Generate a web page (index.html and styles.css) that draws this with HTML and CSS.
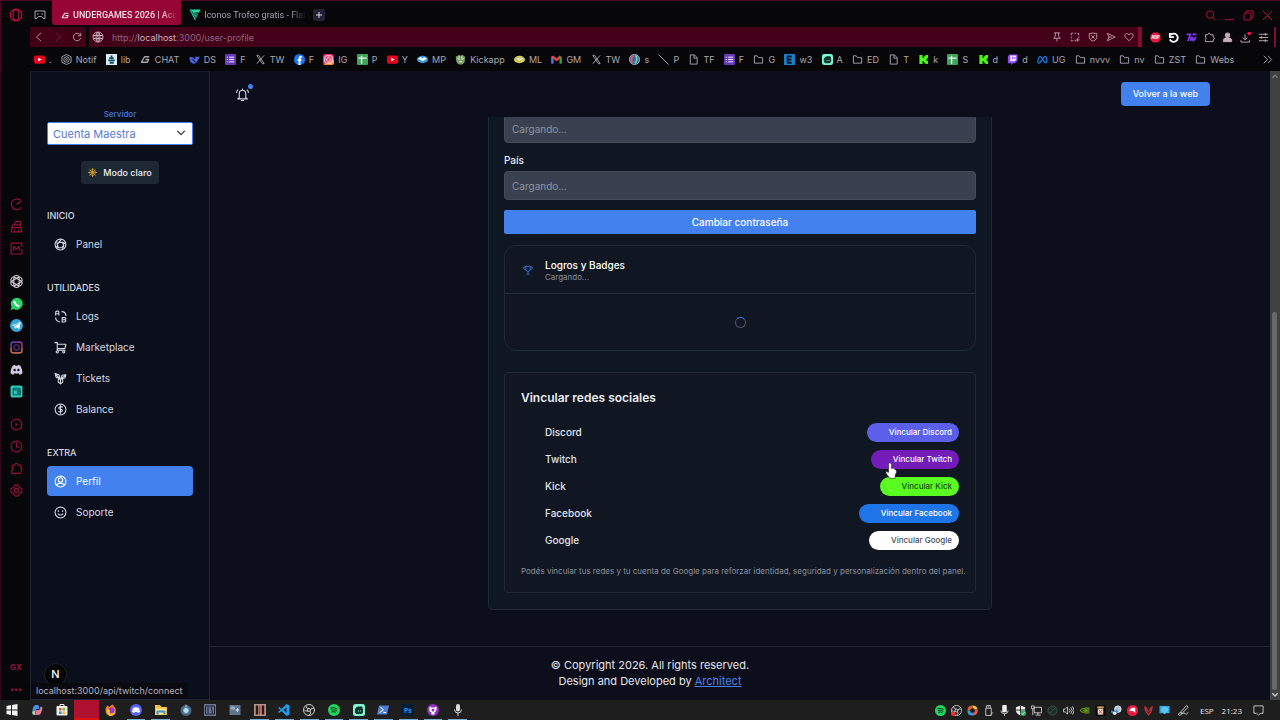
FILE: index.html
```html
<!DOCTYPE html>
<html lang="es">
<head>
<meta charset="utf-8">
<meta name="viewport" content="width=device-width, initial-scale=1">
<title>UNDERGAMES 2026</title>
<link rel="stylesheet" href="styles.css">
</head>
<body>
<svg class="defs" aria-hidden="true">
  <symbol id="folder" viewBox="0 0 24 24"><path d="M3 20V4h6l3 4h9v12z"/></symbol>
  <symbol id="file" viewBox="0 0 24 24"><path d="M5 2h9l6 6v14H5zM13 2v7h7"/></symbol>
  <symbol id="tube" viewBox="0 0 24 24"><rect y="3" width="24" height="18" rx="4" fill="#e8001c" stroke="none"/><path d="M9 8l8 4-8 4z" fill="#fff" stroke="none"/></symbol>
  <symbol id="forms" viewBox="0 0 24 24"><rect width="24" height="24" rx="2" fill="#673ab7" stroke="none"/><path d="M9 7h11M9 12h11M9 17h11M4 7h2M4 12h2M4 17h2" stroke="#fff"/></symbol>
  <symbol id="sheet" viewBox="0 0 24 24"><rect width="24" height="24" rx="2" fill="#3fa35a" stroke="none"/><path d="M3 9h18M10 4v17" stroke="#e8f5e9" stroke-width="3"/></symbol>
  <symbol id="xlogo" viewBox="0 0 24 24"><path d="M4 3h4l12 18h-4zM20 3L4 21"/></symbol>
  <symbol id="kick" viewBox="0 0 24 24"><path d="M3 2h7v6h3V5h3V2h6v7h-3v6h3v7h-6v-3h-3v-3h-3v6H3z" fill="#4cf514" stroke="none"/></symbol>
  <symbol id="ug" viewBox="0 0 24 24"><path d="M20 6H10L3 18h13l3-6h-7" stroke-width="3"/></symbol>
  <symbol id="discord" viewBox="0 0 24 24"><path d="M5 5l4-2 1 2h4l1-2 4 2c3 5 4 9 4 14l-5 3-2-3c-3 1-5 1-8 0l-2 3-5-3C1 14 2 10 5 5z" stroke="none"/><circle cx="8.500" cy="13" r="2.300" fill="#19132a" stroke="none"/><circle cx="15.500" cy="13" r="2.300" fill="#19132a" stroke="none"/></symbol>
  <symbol id="spotify" viewBox="0 0 24 24"><circle cx="12" cy="12" r="12" fill="#1ed760" stroke="none"/><path d="M5 8q8-2 14 2M6 12q7-2 12 2M7 16q5-2 9 1" stroke="#102c18"/></symbol>
  <symbol id="stream" viewBox="0 0 24 24"><rect width="24" height="24" rx="5" fill="#80f5d2" stroke="none"/><path d="M6 10q0-4 5-4h7v4M5 10h14v6q0 3-3 3H8q-3 0-3-3z" fill="#10352d" stroke="#10352d"/><path d="M11 13v2M15 13v2" stroke="#80f5d2"/></symbol>
  <symbol id="obs" viewBox="0 0 24 24"><circle cx="12" cy="12" r="11" fill="#202020"/><circle cx="12" cy="12" r="3"/><path d="M12 9q-7 0-6-5M14 14q4 5-2 8M10 14q-7 1-8-3M15 12q2-6 6-3"/></symbol>
</svg>

<header class="browser">
  <div class="tabs">
    <svg class="i opera" viewBox="0 0 24 24"><circle cx="12" cy="12" r="10"/><ellipse cx="12" cy="12" rx="5" ry="9"/></svg>
    <svg class="i pad" viewBox="0 0 24 24"><path d="M2 4h20v15h-4l-3-4H9l-3 4H2z"/><path d="M6 10h3M15 10h3"/></svg>
    <div class="tab active"><svg class="i" viewBox="0 0 24 24"><use href="#ug"/></svg><span>UNDERGAMES 2026 | Acc</span></div>
    <div class="tab idle"><svg class="i" viewBox="0 0 24 24"><path d="M1 1h22l-3 6H9l9 3-6 13z" fill="#21dfa6" stroke="none"/><path d="M5 3l8 16 2-9H8" stroke="#075844"/></svg><span>Iconos Trofeo gratis - Flat</span></div>
    <button class="plus" aria-label="Nueva pestaña"><svg class="i" viewBox="0 0 24 24"><path d="M12 3v18M3 12h18"/></svg></button>
    <div class="window">
      <svg class="i" viewBox="0 0 24 24"><circle cx="11" cy="10" r="8"/><path d="M16 16l6 6"/></svg>
      <svg class="i" viewBox="0 0 24 24"><path d="M2 21h20"/></svg>
      <svg class="i" viewBox="0 0 24 24"><rect x="2" y="7" width="15" height="15" rx="2"/><path d="M7 7V2h15v15h-5"/></svg>
      <svg class="i" viewBox="0 0 24 24"><path d="M2 2l20 20M22 2L2 22"/></svg>
    </div>
  </div>
  <div class="address">
    <div class="nav">
      <button aria-label="Atrás"><svg class="i" viewBox="0 0 24 24"><path d="M17 2L6 12l11 10"/></svg></button>
      <button aria-label="Adelante" disabled><svg class="i" viewBox="0 0 24 24"><path d="M7 2l11 10L7 22"/></svg></button>
      <button aria-label="Recargar"><svg class="i" viewBox="0 0 24 24"><path d="M21 14a9 9 0 1 1-2-8l2 3M21 2v7h-7"/></svg></button>
    </div>
    <div class="url">
      <svg class="i" viewBox="0 0 24 24"><circle cx="12" cy="12" r="10"/><ellipse cx="12" cy="12" rx="4" ry="10"/><path d="M2 9h20M2 15h20M12 2v20"/></svg>
      <span class="link">http://<b>localhost</b>:3000/user-profile</span>
      <div class="urltools">
        <svg class="i" viewBox="0 0 24 24"><path d="M5 2h14M8 2v8l-4 5h16l-4-5V2M12 15v8"/></svg>
        <svg class="i" viewBox="0 0 24 24"><path d="M3 8V3h5M11 3h4M18 3h3v5M21 11v4M3 11v4M3 18v3h5M11 21h4M18 15v8M14 19h9"/></svg>
        <svg class="i" viewBox="0 0 24 24"><path d="M3 4q9-3 18 0v10q-2 6-9 8-7-2-9-8zM8 8l8 8M16 8l-8 8"/></svg>
        <svg class="i" viewBox="0 0 24 24"><path d="M3 3l19 9-19 9 4-9zM7 12h7"/></svg>
        <svg class="i" viewBox="0 0 24 24"><path d="M12 21L4 13C-2 5 8 0 12 7c4-7 14-2 8 6z"/></svg>
      </div>
    </div>
    <div class="extensions">
      <svg class="i" viewBox="0 0 24 24"><path d="M7 1h10l6 6v10l-6 6H7l-6-6V7z" fill="#e21843" stroke="none"/><text x="12" y="16" text-anchor="middle" class="abp">ABP</text></svg>
      <svg class="i bright" viewBox="0 0 24 24"><path d="M6 6a9 9 0 1 1-2 10M4 2v9h9" stroke-width="4"/></svg>
      <svg class="i seven" viewBox="0 0 24 24"><path d="M1 5h9L4 20M12 11l-2 9M14 11l2 8 6-8M14 5h9" stroke-width="4"/></svg>
      <svg class="i" viewBox="0 0 24 24"><path d="M3 6h5q1-5 5-3l1 3h6v5q4 1 2 5l-2 1v4H3v-5q4-2 0-5z"/></svg>
      <svg class="i" viewBox="0 0 24 24"><circle cx="12" cy="7" r="5" fill="currentColor"/><path d="M3 21v-5l4-3h10l4 3v5z" fill="currentColor"/></svg>
      <svg class="i" viewBox="0 0 24 24"><path d="M11 5v12M6 12l5 5 5-5M2 18v4h19v-4"/><circle cx="20" cy="3" r="4" fill="#ed174e" stroke="none"/></svg>
      <svg class="i" viewBox="0 0 24 24"><path d="M2 5h20M2 12h20M2 19h20M16 2v6M7 9v6M16 16v6"/></svg>
    </div>
  </div>
  <nav class="bookmarks" aria-label="Marcadores">
    <a href="#"><svg class="i"><use href="#tube"/></svg>.</a>
    <a href="#"><svg class="i" viewBox="0 0 24 24"><path d="M12 1l10 5v12l-10 5-10-5V6z"/><circle cx="12" cy="12" r="6"/><circle cx="12" cy="12" r="2"/></svg>Notif</a>
    <a href="#"><svg class="i" viewBox="0 0 24 24"><path d="M0 0h24v24H0z" fill="#d9edf4" stroke="none"/><path d="M12 3v6M7 9h10M5 14h14M8 19h9" stroke="#174c68" stroke-width="4"/></svg>lib</a>
    <a href="#"><svg class="i"><use href="#ug"/></svg>CHAT</a>
    <a href="#"><svg class="i" viewBox="0 0 24 24"><path d="M1 7q8-2 12 5 2-4 1-8 3 5 9 1-1 6-4 8-2 8-9 8Q1 20 1 7z" fill="#4767e9" stroke="none"/><path d="M6 12q6 1 8 7" stroke="#08080b"/></svg>DS</a>
    <a href="#"><svg class="i"><use href="#forms"/></svg>F</a>
    <a href="#"><svg class="i"><use href="#xlogo"/></svg>TW</a>
    <a href="#"><svg class="i" viewBox="0 0 24 24"><circle cx="12" cy="12" r="12" fill="#1877f2" stroke="none"/><path d="M12 24V10q0-4 5-4M8 13h8" stroke="#fff" stroke-width="4"/></svg>F</a>
    <a href="#"><svg class="i" viewBox="0 0 24 24"><rect width="24" height="24" rx="6" fill="#e1306c" stroke="none"/><path d="M0 24L24 12v7q0 5-5 5z" fill="#fc8d35" stroke="none"/><rect x="4" y="4" width="16" height="16" rx="4" stroke="#fff"/><circle cx="12" cy="12" r="4" stroke="#fff"/></svg>IG</a>
    <a href="#"><svg class="i"><use href="#sheet"/></svg>P</a>
    <a href="#"><svg class="i"><use href="#tube"/></svg>Y</a>
    <a href="#"><svg class="i" viewBox="0 0 24 24"><ellipse cx="12" cy="12" rx="12" ry="8" fill="#369cd9" stroke="none"/><path d="M2 10l6-3 4 2 4-2 6 3-10 6z" fill="#e6f8ff" stroke="none"/></svg>MP</a>
    <a href="#"><svg class="i" viewBox="0 0 24 24"><path d="M2 5q4 0 5-3 5 2 10 0l5 4q1 13-6 17H8Q1 19 2 5z" fill="#779963" stroke="none"/><path d="M5 10l5 2M14 12l5-2M8 17h8M9 5v5M15 5v5" stroke="#e4f5d8"/></svg>Kickapp</a>
    <a href="#"><svg class="i" viewBox="0 0 24 24"><ellipse cx="12" cy="12" rx="12" ry="8" fill="#dbd657" stroke="none"/><path d="M3 10l6-3 4 2 5-2 3 3-9 6z" fill="#f7f5cf" stroke="#747841" stroke-width="1"/></svg>ML</a>
    <a href="#"><svg class="i" viewBox="0 0 24 24"><path d="M3 21V5" stroke="#4285f4" stroke-width="5"/><path d="M3 5l9 8 9-8" stroke="#ea4335" stroke-width="5"/><path d="M21 6v15" stroke="#34a853" stroke-width="5"/></svg>GM</a>
    <a href="#"><svg class="i"><use href="#xlogo"/></svg>TW</a>
    <a href="#"><svg class="i" viewBox="0 0 24 24"><circle cx="12" cy="12" r="11" fill="#31679c" stroke="#b4b9d6"/><path d="M10 3q-9 8-2 16" stroke="#e6506b" stroke-width="4"/><path d="M14 3q7 9-1 17" stroke="#6fca9a" stroke-width="4"/></svg>s</a>
    <a href="#"><svg class="i" viewBox="0 0 24 24"><path d="M1 1l22 22"/></svg>P</a>
    <a href="#"><svg class="i"><use href="#file"/></svg>TF</a>
    <a href="#"><svg class="i"><use href="#forms"/></svg>F</a>
    <a href="#"><svg class="i"><use href="#folder"/></svg>G</a>
    <a href="#"><svg class="i" viewBox="0 0 24 24"><path d="M0 0h24v24H0z" fill="#1681c9" stroke="none"/><path d="M17 5H8v14h9M8 12h8" stroke="#0a1525" stroke-width="4"/></svg>w3</a>
    <a href="#"><svg class="i"><use href="#stream"/></svg>A</a>
    <a href="#"><svg class="i"><use href="#folder"/></svg>ED</a>
    <a href="#"><svg class="i"><use href="#file"/></svg>T</a>
    <a href="#"><svg class="i"><use href="#kick"/></svg>k</a>
    <a href="#"><svg class="i"><use href="#sheet"/></svg>S</a>
    <a href="#"><svg class="i"><use href="#kick"/></svg>d</a>
    <a href="#"><svg class="i" viewBox="0 0 24 24"><path d="M5 1h18v13l-6 6h-4l-4 4v-4H2V5z" fill="#9146ff" stroke="none"/><path d="M7 3h13v9l-3 4H7z" fill="#eee4ff" stroke="none"/><path d="M12 6v5M17 6v5" stroke="#9146ff"/></svg>d</a>
    <a href="#"><svg class="i" viewBox="0 0 24 24"><path d="M2 17C2 8 6 4 9 7l7 10c4 5 7-1 5-7-2-8-6-4-9 1l-5 7c-2 3-5 2-5-1z" stroke="#1473df" stroke-width="3"/></svg>UG</a>
    <a href="#"><svg class="i"><use href="#folder"/></svg>nvvv</a>
    <a href="#"><svg class="i"><use href="#folder"/></svg>nv</a>
    <a href="#"><svg class="i"><use href="#folder"/></svg>ZST</a>
    <a href="#"><svg class="i"><use href="#folder"/></svg>Webs</a>
    <button class="more" aria-label="Más marcadores"><svg class="i" viewBox="0 0 24 24"><path d="M4 4l8 8-8 8M13 4l8 8-8 8"/></svg></button>
  </nav>
</header>

<div class="middle">
  <aside class="rail">
    <div class="group">
      <svg class="i" viewBox="0 0 24 24"><path d="M19 4a10 10 0 1 0 2 13M12 12l9-7"/></svg>
      <svg class="i" viewBox="0 0 24 24"><path d="M7 9l3-6h9v6M5 9h15v5H3zM4 14L2 22h20l-2-8M8 22l1-4M15 22l1-4"/></svg>
      <svg class="i" viewBox="0 0 24 24"><path d="M22 13v9H2V2h20v7M7 16V8l5 5 5-5v8"/></svg>
    </div>
    <div class="group">
      <svg class="i light" viewBox="0 0 24 24"><rect x="7" y="1" width="10" height="22" rx="5"/><rect x="7" y="1" width="10" height="22" rx="5" transform="rotate(60 12 12)"/><rect x="7" y="1" width="10" height="22" rx="5" transform="rotate(120 12 12)"/></svg>
      <svg class="i" viewBox="0 0 24 24"><path d="M1 24l2-6A11 11 0 1 1 7 22z" fill="#25d366" stroke="none"/><path d="M8 7q1 8 9 10" stroke="#fff" stroke-width="4"/></svg>
      <svg class="i" viewBox="0 0 24 24"><circle cx="12" cy="12" r="12" fill="#36a5d7" stroke="none"/><path d="M3 12l17-7-3 14-5-4-3 3-1-5z" fill="#fff" stroke="none"/><path d="M8 13l8-5" stroke="#71b7d7"/></svg>
      <svg class="i" viewBox="0 0 24 24"><path d="M12 2H6Q2 2 2 6v6" stroke="#6739b3" stroke-width="3"/><path d="M12 2h6q4 0 4 4v6" stroke="#94329a" stroke-width="3"/><path d="M2 12v6q0 4 4 4h12q4 0 4-4v-6" stroke="#b6654b" stroke-width="3"/><circle cx="12" cy="12" r="5" stroke="#6d2a85"/></svg>
      <svg class="i disc"><use href="#discord"/></svg>
      <svg class="i" viewBox="0 0 24 24"><rect x="1" y="1" width="22" height="22" rx="3" fill="#2fc8b8" stroke="none"/><path d="M18 9V6H6v12h13V9H6M14 12h5v3h-5z" stroke="#075d60"/></svg>
    </div>
    <div class="group">
      <svg class="i" viewBox="0 0 24 24"><circle cx="12" cy="12" r="10"/><path d="M10 9l5 3-5 3z" fill="currentColor" stroke="none"/></svg>
      <svg class="i" viewBox="0 0 24 24"><circle cx="12" cy="12" r="10"/><path d="M12 5v8h6"/></svg>
      <svg class="i" viewBox="0 0 24 24"><path d="M4 6h5q1-5 5-3l1 3h5v5q4 2 1 6l-2 4H3v-5q5-2 1-5z"/></svg>
      <svg class="i" viewBox="0 0 24 24"><path d="M9 2h6l2 4 5 3v6l-5 3-2 4H9l-2-4-5-3V9l5-3z"/><circle cx="12" cy="12" r="4"/></svg>
    </div>
    <div class="group last"><b>GX</b><b>•••</b></div>
  </aside>

  <div class="page">
    <aside class="side">
      <label class="server" for="server">Servidor</label>
      <div class="pick">
        <select id="server"><option>Cuenta Maestra</option></select>
        <svg class="i" viewBox="0 0 24 24"><path d="M3 7l9 9 9-9"/></svg>
      </div>
      <button class="mode"><svg class="i" viewBox="0 0 24 24"><circle cx="12" cy="12" r="8"/><circle cx="12" cy="12" r="3"/><path d="M12 0v24M0 12h24M4 4l16 16M20 4L4 20"/></svg>Modo claro</button>
      <nav>
        <h2>INICIO</h2>
        <a href="#"><svg class="i" viewBox="0 0 24 24"><circle cx="12" cy="12" r="10"/><path d="M9 8h6l3 5-4 5H8l-2-6zM9 8l5-6M15 8l7 2M18 13l-2 8M8 18l-5-3M6 12L5 5"/></svg>Panel</a>
        <h2>UTILIDADES</h2>
        <a href="#"><svg class="i" viewBox="0 0 24 24"><path d="M3 10V5q0-3 3-3h1q2 0 2 3v5M3 7h6M15 14h4q3 0 3 2t-3 2h-4zM15 18h4q3 0 3 2t-3 2h-4zM14 3q8 0 8 8M3 14q0 7 8 8"/></svg>Logs</a>
        <a href="#"><svg class="i" viewBox="0 0 24 24"><path d="M1 3h5v14h15M6 6h16l-2 8H6"/><circle cx="6" cy="20" r="2"/><circle cx="18" cy="20" r="2"/></svg>Marketplace</a>
        <a href="#"><svg class="i" viewBox="0 0 24 24"><path d="M2 3l7 2 2 7-7-2zM22 5l-7 1-2 6 7-1zM8 13h8v6l-4 3-4-3zM2 3l10 11 10-9M12 14v8"/></svg>Tickets</a>
        <a href="#"><svg class="i" viewBox="0 0 24 24"><circle cx="12" cy="12" r="10"/><path d="M16 8q-2-2-5-1-4 2-1 4l4 1q3 2 0 4-3 2-6-1M12 4v16"/></svg>Balance</a>
        <h2>EXTRA</h2>
        <a href="#" class="current"><svg class="i" viewBox="0 0 24 24"><circle cx="12" cy="12" r="10"/><circle cx="12" cy="9" r="4"/><path d="M5 19q1-4 7-4t7 4"/></svg>Perfil</a>
        <a href="#"><svg class="i" viewBox="0 0 24 24"><circle cx="12" cy="12" r="10"/><path d="M8 8v3M16 8v3M7 14q5 5 10 0"/></svg>Soporte</a>
      </nav>
      <div class="next">N</div>
      <div class="status">localhost:3000/api/twitch/connect</div>
    </aside>

    <div class="content">
      <header class="top">
        <button class="bell" aria-label="Notificaciones"><svg class="i" viewBox="0 0 24 24"><path d="M6 18v-8q0-6 6-6t6 6v8l3 2H3zM12 4V1M9 23h6M1 9q0-4 3-6M23 9q0-4-3-6"/></svg><span class="dot"></span></button>
        <a class="back" href="#">Volver a la web</a>
      </header>
      <main>
        <section class="card">
          <input aria-label="Ciudad" placeholder="Cargando..." readonly>
          <label for="country">País</label>
          <input id="country" placeholder="Cargando..." readonly>
          <button class="change">Cambiar contraseña</button>
          <section class="badges">
            <header>
              <svg class="i" viewBox="0 0 24 24"><path d="M7 3h10v8l-3 4h-4l-3-4zM7 5H2v4l5 3M17 5h5v4l-5 3M12 15v5M8 22h8"/></svg>
              <div><h3>Logros y Badges</h3><p>Cargando...</p></div>
            </header>
            <div class="loading"><span class="spinner"></span></div>
          </section>
          <section class="social">
            <h3>Vincular redes sociales</h3>
            <div class="row"><span>Discord</span><button class="discord">Vincular Discord</button></div>
            <div class="row"><span>Twitch</span><button class="twitch">Vincular Twitch<svg class="cursor" viewBox="0 0 20 28"><path d="M6 17V4q0-3 2-3t3 3v7l2-1q2 0 3 2l2 1q2 1 1 4l-2 5v5H8L2 19q-2-4 1-3z" fill="#fff" stroke="#222" stroke-width="1"/></svg></button></div>
            <div class="row"><span>Kick</span><button class="kick">Vincular Kick</button></div>
            <div class="row"><span>Facebook</span><button class="facebook">Vincular Facebook</button></div>
            <div class="row"><span>Google</span><button class="google">Vincular Google</button></div>
            <p>Podés vincular tus redes y tu cuenta de Google para reforzar identidad, seguridad y personalización dentro del panel.</p>
          </section>
        </section>
      </main>
      <footer><p>© Copyright 2026. All rights reserved.</p><p>Design and Developed by <a href="#">Architect</a></p></footer>
    </div>
    <div class="scroll">
      <svg class="i" viewBox="0 0 24 24"><path d="M4 17l8-8 8 8"/></svg>
      <div class="track"><div class="thumb"></div></div>
      <svg class="i end" viewBox="0 0 24 24"><path d="M4 7l8 8 8-8"/></svg>
    </div>
  </div>
</div>

<footer class="taskbar">
  <div class="apps">
    <span><svg class="i" viewBox="0 0 24 24"><path d="M1 4l9-2v9H1zM12 2l11-2v11H12zM1 13h9v9l-9-2zM12 13h11v11l-11-2z" fill="#f3f3f3" stroke="none"/></svg></span>
    <span><svg class="i" viewBox="0 0 24 24"><path d="M10 2h5l2 8h-6L8 22H6q-4 0-4-4l2-11q1-5 6-5z" fill="#3d91dd" stroke="none"/><path d="M14 22H8l3-10h6l2-7q4 0 4 4l-3 9q-1 4-6 4z" fill="#e27996" stroke="none"/><path d="M3 15l5-1-1 8q-4 0-4-7z" fill="#ead259" stroke="none"/></svg></span>
    <span><svg class="i" viewBox="0 0 24 24"><rect x="1" y="4" width="22" height="19" rx="2" fill="#eee" stroke="none"/><path d="M8 4V1h8v3" stroke="#eee"/><path d="M6 8h5v5H6z" fill="#f05032" stroke="none"/><path d="M13 8h5v5h-5z" fill="#78b82a" stroke="none"/><path d="M6 15h5v5H6z" fill="#168de2" stroke="none"/><path d="M13 15h5v5h-5z" fill="#fdbb23" stroke="none"/></svg></span>
    <span class="redapp"></span>
    <span><svg class="i" viewBox="0 0 24 24"><path d="M2 7l3-4 4 3q3-5 7-5 1 4 5 7 3 15-9 16Q-2 22 2 7z" fill="#f77825" stroke="none"/><circle cx="13" cy="13" r="6" fill="#8d3cc7" stroke="none"/><path d="M3 11q9-2 6 7 6 4 11-4-1 10-10 10-6-2-7-13z" fill="#ffc236" stroke="none"/></svg></span>
    <span class="open"><svg class="i" viewBox="0 0 24 24"><circle cx="12" cy="12" r="12" fill="#5865f2" stroke="none"/><path d="M6 8q6-3 12 0l2 8-4 2-2-2h-4l-2 2-4-2z" fill="#fff" stroke="none"/><path d="M9 12v1M15 12v1" stroke="#5865f2"/></svg></span>
    <span class="open"><svg class="i" viewBox="0 0 24 24"><path d="M0 2h10l3 4h11v16H0z" fill="#f2bd40" stroke="none"/><path d="M2 9h20v12H2z" fill="#ffe38d" stroke="none"/><path d="M5 21v-6h14v6" stroke="#3b95ce" stroke-width="4"/></svg></span>
    <span><svg class="i" viewBox="0 0 24 24"><circle cx="12" cy="13" r="11" fill="#49657d" stroke="none"/><circle cx="12" cy="13" r="6" fill="#b9dae7" stroke="#4a91bd"/><path d="M12 1v5"/></svg></span>
    <span><svg class="i" viewBox="0 0 24 24"><rect width="24" height="24" fill="#6b7690" stroke="none"/><path d="M3 4h18v16H3zM8 5v14M14 5l3 14" stroke="#1c2239"/></svg></span>
    <span><svg class="i" viewBox="0 0 24 24"><rect x="1" y="2" width="22" height="20" fill="#60758e" stroke="none"/><path d="M3 5h9v6H3z" fill="#94aec7" stroke="none"/><path d="M13 12h7M17 8v8" stroke="#dfeaf3"/></svg></span>
    <span class="open"><svg class="i" viewBox="0 0 24 24"><rect width="24" height="24" fill="#b49384" stroke="none"/><path d="M6 3v18M18 3v18" stroke="#2a1719" stroke-width="5"/><path d="M10 3h3v18h-3z" fill="#d23b38" stroke="none"/></svg></span>
    <span class="open"><svg class="i" viewBox="0 0 24 24"><path d="M17 0l6 3v18l-6 3L7 14l-4 4-3-2 5-4-5-4 3-2 4 4zM17 7l-6 5 6 5z" fill="#219bea" fill-rule="evenodd" stroke="none"/></svg></span>
    <span class="open"><svg class="i"><use href="#obs"/></svg></span>
    <span class="open"><svg class="i"><use href="#spotify"/></svg></span>
    <span class="open"><svg class="i"><use href="#stream"/></svg></span>
    <span class="open"><svg class="i" viewBox="0 0 24 24"><path d="M4 3h20l-4 18H0z" fill="#4e7fd1" stroke="none"/><path d="M7 6l6 6-8 5M13 17h5" stroke="#fff"/></svg></span>
    <span class="open"><svg class="i" viewBox="0 0 24 24"><rect width="24" height="24" rx="4" fill="#001e36" stroke="none"/><text x="12" y="17" text-anchor="middle" class="ps">Ps</text></svg></span>
    <span class="open"><svg class="i" viewBox="0 0 24 24"><circle cx="12" cy="12" r="12" fill="#8c35ba" stroke="none"/><path d="M9 21v-4q-5-1-4-7V5l4 2h6l4-2v5q0 6-4 7v4z" fill="#fff" stroke="none"/><circle cx="12" cy="12" r="3" fill="#8c35ba" stroke="none"/></svg></span>
    <span class="open"><svg class="i" viewBox="0 0 24 24"><rect x="8" y="0" width="8" height="15" rx="4" fill="#ddd" stroke="none"/><path d="M5 11q0 7 7 7t7-7M12 18v6"/></svg></span>
  </div>
  <div class="tray">
    <svg class="i"><use href="#spotify"/></svg>
    <svg class="i" viewBox="0 0 24 24"><use href="#obs"/><circle cx="5" cy="19" r="5" fill="#ed3033" stroke="none"/></svg>
    <svg class="i" viewBox="0 0 24 24"><path d="M12 4a8 8 0 0 1 8 5" stroke="#edcc31" stroke-width="6"/><path d="M20 9q2 10-7 11" stroke="#ef553c" stroke-width="6"/><path d="M13 20Q3 21 4 12" stroke="#319ee5" stroke-width="6"/><path d="M4 12q0-8 8-8" stroke="#ef553c" stroke-width="6"/></svg>
    <svg class="i" viewBox="0 0 24 24"><path d="M8 7V1h8v6M6 7h12v16H6zM11 4h2M17 21l5-5"/></svg>
    <svg class="i" viewBox="0 0 24 24"><rect x="7" y="0" width="10" height="16" rx="2" fill="#eee" stroke="none"/><path d="M4 12q0 7 8 7t8-7M12 19v5"/></svg>
    <svg class="i" viewBox="0 0 24 24"><path d="M12 1l10 4v8q-2 7-10 10Q4 20 2 13V5z" fill="#eee" stroke="none"/><path d="M12 1v22M2 11h20" stroke="#222"/><circle cx="18" cy="18" r="6" fill="#2dae68" stroke="none"/><path d="M15 18l2 2 4-4" stroke="#fff"/></svg>
    <svg class="i" viewBox="0 0 24 24"><path d="M7 5h16v12H7zM15 17v5M10 22h11M1 2h6v6H1zM4 8v14"/></svg>
    <svg class="i" viewBox="0 0 24 24"><circle cx="12" cy="12" r="10" stroke="#40534d" fill="#1c302c"/><path d="M5 19L19 5" stroke="#40534d"/></svg>
    <svg class="i" viewBox="0 0 24 24"><path d="M1 9h4l5-5v16l-5-5H1zM14 8q3 4 0 8M17 5q6 7 0 14M21 3q6 9 0 18"/></svg>
    <svg class="i" viewBox="0 0 24 24"><path d="M12 5h11v14H12z" fill="#517328" stroke="none"/><path d="M2 12q8-9 15 0-7 8-15 0M8 12h4" stroke="#76b900"/></svg>
    <svg class="i" viewBox="0 0 24 24"><path d="M1 0h22v24H1z" fill="#0c0a08" stroke="none"/><path d="M5 3h14v4H5z" fill="#d7a364" stroke="none"/><path d="M6 8h12v13H6z" fill="#e7dcce" stroke="none"/><path d="M8 10l8 9M16 10l-8 9" stroke="#d24127"/></svg>
    <svg class="i" viewBox="0 0 24 24"><circle cx="15" cy="9" r="7" fill="#a8c7e7" stroke="#eef5fb"/><path d="M0 14l8 3 6-5" stroke="#3f7db9" stroke-width="5"/><circle cx="8" cy="18" r="4" fill="#dfeefa" stroke="none"/></svg>
    <svg class="i" viewBox="0 0 24 24"><circle cx="12" cy="12" r="12" fill="#e51b45" stroke="none"/><path d="M6 11l4-5h8v11l-5-4H6z" fill="#fff" stroke="none"/></svg>
    <svg class="i" viewBox="0 0 24 24"><path d="M2 2l6 3 4 9 4-9 6-3-3 13-7 9-7-9z" fill="#b82e3b" stroke="none"/><path d="M8 13l4 5 4-5" stroke="#331d20"/></svg>
    <svg class="i" viewBox="0 0 24 24"><path d="M1 2h22v16H1z" fill="#31a6df" stroke="none"/><path d="M12 3l8 3v7l-8 7-7-7V6z" fill="#5bc4ef" stroke="none"/></svg>
    <svg class="i pen" viewBox="0 0 24 24"><path d="M5 16L19 1l3 4L9 18zM9 18q-7-3-8 2 1 5 7 0 6-5 8-1 2 4 6-3"/></svg>
    <span>ESP</span><time>21:23</time>
    <svg class="i note" viewBox="0 0 24 24"><path d="M2 2h20v16h-6l-4 4-4-4H2z"/></svg>
  </div>
</footer>
</body>
</html>
```

FILE: styles.css
```css
* { box-sizing: border-box; }
body {
  margin: 0;
  height: 100vh;
  display: flex;
  flex-direction: column;
  overflow: hidden;
  background: #07070a;
  color: #d5d8e2;
  font-family: Inter, "Liberation Sans", sans-serif;
  font-size: 10px;
}
h2, h3, p { margin: 0; }
button, input, select { font: inherit; color: inherit; border: 0; padding: 0; margin: 0; background: none; }
a { color: inherit; text-decoration: none; }
.defs { position: absolute; width: 0; height: 0; }
.i {
  width: 12px;
  height: 12px;
  flex: none;
  display: block;
  fill: none;
  stroke: currentColor;
  stroke-width: 2;
  stroke-linejoin: round;
}

/* Browser chrome */
.browser { flex: none; border-left: 1px solid #4a0920; border-top: 1px solid #4a0920; font-family: Inter, "Liberation Sans", sans-serif; font-size: 9px; }
.tabs { height: 26px; padding-top: 2px; display: flex; align-items: center; }
.opera { width: 14px; height: 14px; margin-left: 8px; color: #c1123f; }
.pad { margin-left: 11px; color: #aaa8b1; }
.tab { display: flex; align-items: center; gap: 3px; white-space: nowrap; }
.tab span { mask-image: linear-gradient(90deg, #000 85%, transparent); }
.tab .i { width: 9px; height: 9px; }
.active { min-width: 127px; height: 20px; margin-left: 6px; padding: 0 4px 0 9px; border-radius: 3px; background: #970536; color: #f1dce4; font-family: Roboto, "Liberation Sans", sans-serif; font-weight: 500; box-shadow: 0 -6px #970536; }
.idle { min-width: 122px; margin-left: 8px; color: #a3a1ac; font-family: Roboto, "Liberation Sans", sans-serif; }
.idle .i { width: 12px; height: 12px; }
.plus { width: 12px; height: 12px; margin-left: 2px; padding: 2px; border-radius: 2px; background: #241f32; }
.plus .i { width: 8px; height: 8px; stroke-width: 3; }
.window { margin-left: auto; margin-right: 7px; display: flex; gap: 8px; color: #ba1540; }
.window .i { width: 11px; height: 11px; }
.address { height: 20px; padding-left: 29px; display: flex; gap: 3px; color: #c5adb9; }
.nav { width: 56px; background: #420017; display: flex; align-items: center; justify-content: space-around; }
.nav .i { width: 10px; height: 10px; }
.nav button:disabled { color: #7b2743; }
.url { flex: 1; background: #440018; border-right: 4px solid #870a31; display: flex; align-items: center; padding-left: 3px; }
.link { margin-left: 8px; color: #90657f; }
.link b { font-weight: 400; color: #c8b5c3; }
.urltools { display: flex; gap: 8px; margin-left: auto; margin-right: 4px; }
.urltools .i { width: 10px; height: 10px; }
.extensions { display: flex; align-items: center; gap: 7px; padding: 0 5px 0 5px; margin-right: 4px; border-right: 2px solid #870a31; }
.extensions .i { width: 11px; height: 11px; }
.bright { color: #fff; }
.seven { color: #7d35e9; }
.abp { fill: #fff; stroke: none; font-size: 9px; font-weight: 700; }
.bookmarks { height: 24px; padding: 0 7px 0 33px; display: flex; align-items: center; justify-content: space-between; color: #aaa8b1; }
.bookmarks a { display: flex; align-items: center; gap: 4px; }
.bookmarks .i { width: 11px; height: 11px; }
.more { margin-left: 18px; }

/* Browser side rail */
.middle { flex: 1; min-height: 0; display: flex; }
.rail { width: 30px; flex: none; padding: 122px 0 0 2px; display: flex; flex-direction: column; align-items: center; box-shadow: inset 1px 0 #310a19; color: #981338; }
.group { display: grid; grid-auto-rows: 22px; place-items: center; margin-bottom: 11px; }
.rail .i { width: 13px; height: 13px; }
.rail .light { color: #d0cdd5; stroke-width: 2; }
.rail .disc { fill: #d4c9e1; }
.rail .last { margin-top: auto; margin-bottom: 0; font-size: 8px; }

/* Dashboard */
.page { flex: 1; min-width: 0; display: flex; background: #0d0e1c; }
.side { width: 180px; flex: none; position: relative; padding: 36px 16px 0; background: #0b0f1b; border: 1px solid #1b2434; border-top-color: #151b29; display: flex; flex-direction: column; }
.server { font-size: 8px; line-height: 12px; text-align: center; font-weight: 500; color: #4779df; }
.pick { position: relative; margin-top: 2px; }
.pick select { display: block; width: 100%; height: 23px; padding: 0 5px; appearance: none; border: 1px solid #437fe9; border-radius: 2px; background: #fff; color: #587ad7; font-size: 11px; }
.pick .i { position: absolute; right: 7px; top: 6px; width: 10px; height: 10px; color: #333743; stroke-width: 3; }
.mode { align-self: center; display: flex; align-items: center; gap: 6px; height: 23px; margin-top: 16px; padding: 0 7px; border-radius: 3px; background: #1d2834; color: #eef0f5; font-size: 9px; font-weight: 500; }
.mode .i { width: 9px; height: 9px; color: #d4a02a; }
.side nav { display: grid; gap: 1px; margin-top: 25px; }
.side h2 { margin-bottom: 5px; font-size: 9px; line-height: 14px; font-weight: 500; }
.side a + h2 { margin-top: 21px; }
.side nav a { height: 30px; padding: 0 7px; display: flex; align-items: center; gap: 9px; border-radius: 4px; }
.side nav .i { width: 13px; height: 13px; }
.side nav .current { background: #4281ee; color: #fff; }
.next { position: absolute; left: 13px; bottom: 13px; width: 23px; height: 23px; border: 1px solid #20232b; border-radius: 50%; background: #020303; color: #fff; font-size: 11px; font-weight: 500; line-height: 21px; text-align: center; }
.status { position: absolute; left: 0; bottom: 0; height: 16px; padding: 0 5px; background: #09090f; color: #b7b6c1; font-size: 9px; line-height: 15px; white-space: nowrap; }
.content { flex: 1; min-width: 0; display: flex; flex-direction: column; }
.top { height: 46px; flex: none; display: flex; align-items: center; justify-content: space-between; padding: 0 60px 0 26px; }
.bell { position: relative; }
.bell .i { width: 13px; height: 13px; }
.dot { position: absolute; left: 12px; top: -4px; width: 5px; height: 5px; border-radius: 50%; background: #4281ee; }
.back { height: 24px; padding: 0 12px; border-radius: 4px; background: #4281ee; color: #fff; line-height: 24px; font-size: 9px; font-weight: 500; }
main { flex: 1; min-height: 0; overflow: hidden; display: flex; flex-direction: column; justify-content: flex-end; align-items: center; padding-bottom: 36px; }
.card { flex: none; width: 100%; max-width: 504px; padding: 16px 15px; display: flex; flex-direction: column; background: #0f1722; border: 1px solid #202936; border-radius: 4px; }
.card label { line-height: 14px; margin-bottom: 4px; font-weight: 500; color: #e9ecf3; }
.card input { height: 29px; margin-bottom: 10px; padding: 0 7px; border: 1px solid #444e5a; border-radius: 4px; background: #394150; }
.card input::placeholder { color: #8b94a2; opacity: 1; }
.change { height: 24px; border-radius: 2px; background: #4281ee; color: #fff; font-weight: 500; }
.badges { margin-top: 11px; border: 1px solid #202936; border-radius: 12px; background: #101622; }
.badges header { height: 48px; padding: 0 18px; display: flex; align-items: center; gap: 12px; border-bottom: 1px solid #26313e; }
.badges header .i { width: 10px; height: 10px; color: #4281ee; }
.badges h3 { font-size: 10px; line-height: 14px; font-weight: 500; color: #fff; }
.badges p { font-size: 8px; line-height: 10px; color: #8992a0; }
.loading { height: 56px; display: grid; place-items: center; }
.spinner { width: 11px; height: 11px; border: 1px solid #465267; border-top-color: #4281ee; border-radius: 50%; }
.social { margin-top: 21px; padding: 16px 16px 15px; border: 1px solid #202936; border-radius: 4px; background: #101622; }
.social h3 { margin-bottom: 16px; font-size: 12px; line-height: 18px; font-weight: 600; color: #e9ecf3; }
.row { display: flex; align-items: center; justify-content: space-between; margin-bottom: 8px; padding-left: 24px; line-height: 19px; font-weight: 500; color: #e1e4ec; }
.row button { position: relative; height: 19px; padding: 0 7px 0 22px; border-radius: 10px; color: #fff; font-size: 8px; font-weight: 500; }
.row .discord { background: #5b5fe9; }
.row .twitch { background: #731cb8; }
.row .kick { background: #59fb20; color: #184b13; }
.row .facebook { background: #1e75e8; }
.row .google { background: #fff; color: #4a4d52; }
.cursor { position: absolute; z-index: 2; left: 14px; top: 12px; width: 12px; height: 17px; }
.social p { margin-top: 15px; font-size: 8px; line-height: 12px; white-space: nowrap; color: #8992a0; }
.content > footer { flex: none; height: 54px; padding: 10px 180px 0 0; border-top: 1px solid #202531; text-align: center; font-size: 11px; line-height: 16px; color: #e4e5eb; }
.content > footer a { color: #4a83e9; text-decoration: underline; }
.scroll { width: 10px; flex: none; display: flex; flex-direction: column; align-items: center; background: #414141; color: #777; }
.scroll .i { width: 8px; height: 10px; stroke-width: 4; }
.scroll .end { color: #ccc; }
.track { flex: 1; align-self: stretch; display: flex; align-items: flex-end; padding: 0 3px 0 2px; }
.thumb { width: 100%; height: 62%; border-radius: 3px; background: #686868; }

/* Taskbar */
.taskbar { height: 20px; flex: none; display: flex; justify-content: space-between; background: #1d1e1d; color: #ccc; }
.apps { display: grid; grid-template-columns: repeat(19, 1fr); width: 470px; }
.apps span { display: grid; place-items: center; }
.apps .open { margin: 0 3px; box-shadow: inset 0 -1px #75aed4; }
.apps .redapp { background: #ae1230; box-shadow: inset 0 -2px #dd1010; }
.tray { display: flex; align-items: center; gap: 5px; padding-right: 16px; }
.tray .i { width: 11px; height: 11px; }
.tray .pen { margin: 0 6px 0 3px; }
.tray span, .tray time { font-family: "Open Sans", sans-serif; font-size: 8px; color: #e4e4e4; }
.tray time { margin: 0 6px 0 3px; }
.ps { fill: #31a8ff; stroke: none; font-size: 13px; font-weight: 600; }
```
